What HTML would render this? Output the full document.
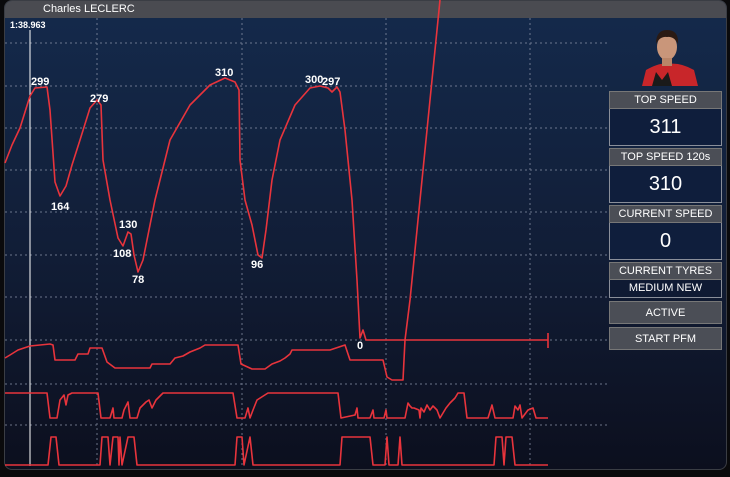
<!DOCTYPE html>
<html><head><style>
body{margin:0;width:730px;height:477px;background:#0a0a0c;overflow:hidden;font-family:"Liberation Sans",sans-serif;position:relative}
.win{position:absolute;left:4px;top:0;width:723px;height:470px;border-radius:8px;overflow:hidden;background:linear-gradient(#142a4c,#111d36 55%,#0c0f1e);border:1px solid #3a3d44;box-sizing:border-box}
.title{position:absolute;left:0;top:0;right:0;height:17px;background:#4a4b51;color:#fff;font-size:11px;line-height:17px;padding-left:38px}
svg{position:absolute;left:0;top:0}
.p{position:absolute;left:609px;width:113px;box-sizing:border-box;color:#fff;text-align:center}
.h{background:#4b4e56;border:1px solid #777;font-size:11px;height:18px;line-height:17px}
.v{background:#0f1e3c;border:1px solid #8a8f9a;border-top:none;font-size:20px;height:37px;line-height:36px}
.b{background:#4b4e56;border:1px solid #777;font-size:11px;height:23px;line-height:22px}
</style></head><body>
<div class="win"><div class="title">Charles LECLERC</div></div>
<svg width="730" height="477">
<g stroke="#8a93a8" stroke-width="1" stroke-dasharray="2,3" opacity="0.75">
<line x1="97" y1="18" x2="97" y2="466"/><line x1="242" y1="18" x2="242" y2="466"/><line x1="386" y1="18" x2="386" y2="466"/><line x1="530" y1="18" x2="530" y2="466"/>
<line x1="5" y1="43" x2="609" y2="43"/><line x1="5" y1="86" x2="609" y2="86"/><line x1="5" y1="128" x2="609" y2="128"/><line x1="5" y1="170" x2="609" y2="170"/><line x1="5" y1="212" x2="609" y2="212"/><line x1="5" y1="255" x2="609" y2="255"/><line x1="5" y1="297" x2="609" y2="297"/><line x1="5" y1="340" x2="609" y2="340"/><line x1="5" y1="384" x2="609" y2="384"/><line x1="5" y1="425" x2="609" y2="425"/>
</g>
<line x1="30" y1="30" x2="30" y2="466" stroke="#fff" stroke-width="1"/>
<g fill="none" stroke="#e8343c" stroke-width="1.6" stroke-linejoin="round">
<polyline points="5,163 12,145 20,128 30,96 35,88 47,87 50,110 55,182 60,196 66,186 72,165 80,140 90,108 97,100 101,105 103,160 110,200 118,238 123,246 128,232 131,234 134,255 138,272 143,260 148,235 155,200 170,140 190,105 210,85 225,78 235,82 239,90 240,160 245,200 252,225 258,255 262,258 266,230 272,180 280,140 295,105 310,88 320,86 328,88 332,92 337,87 340,92 345,130 352,200 357,280 360,338 363,330 366,340 548,340"/>
<line x1="548" y1="333" x2="548" y2="348"/>
<polyline points="5,358 10,355 18,350 30,346 40,345 50,344 53,345 55,360 75,360 78,354 88,354 90,348 102,348 107,362 115,368 150,368 152,364 170,364 175,358 183,356 190,352 200,348 205,345 238,345 241,364 252,369 265,369 272,364 280,361 285,358 290,354 292,350 330,350 345,345 350,360 383,360 387,377 392,380 403,380 405,340 410,300 425,150 440,0"/>
<polyline points="5,393 47,393 50,418 57,418 60,400 64,395 66,405 68,395 72,393 98,393 101,418 110,418 113,408 114,418 122,418 124,410 128,402 130,418 137,418 140,408 146,402 149,400 152,408 156,400 163,393 233,393 237,418 245,418 248,408 250,418 253,410 257,400 268,393 338,393 341,418 355,415 357,408 358,418 370,418 373,410 374,418 384,418 386,410 387,418 405,418 408,403 410,406 412,408 414,408 419,410 420,418 421,408 424,412 427,405 430,410 433,406 437,410 440,418 446,408 450,403 455,398 458,393 464,393 467,418 488,418 492,405 495,418 513,418 515,406 518,410 520,405 522,418 528,410 533,408 536,418 548,418"/>
<polyline points="5,465 48,465 51,437 56,437 59,465 100,465 102,437 108,437 110,465 113,437 118,437 119,465 120,437 122,465 128,437 134,437 137,465 235,465 237,437 242,437 244,465 250,437 253,465 340,465 342,437 370,437 373,465 385,465 387,437 389,465 398,465 400,437 402,465 494,465 496,437 502,437 504,465 506,437 512,437 515,465 548,465"/>
</g>
<g fill="#fff" font-family="Liberation Sans" font-weight="bold" font-size="11">
<text x="31" y="85">299</text><text x="51" y="210">164</text><text x="90" y="102">279</text><text x="119" y="228">130</text><text x="113" y="257">108</text><text x="132" y="283">78</text><text x="215" y="76">310</text><text x="251" y="268">96</text><text x="305" y="83">300</text><text x="322" y="85">297</text><text x="357" y="349">0</text>
<text x="10" y="28" font-size="9">1:38.963</text>
</g>
<g>
<path d="M642 86 L646 70 Q660 62 668 64 Q680 62 694 70 L698 86Z" fill="#c8262a"/>
<path d="M652 86 L656 72 L662 80 L668 72 L672 86Z" fill="#1a1a1a"/>
<ellipse cx="667" cy="47" rx="10" ry="13" fill="#c9967a"/>
<path d="M656 44 Q656 30 667 30 Q679 30 678 44 Q674 36 667 37 Q660 36 656 44Z" fill="#2a1a14"/>
<rect x="662" y="58" width="10" height="8" fill="#b98568"/>
</g>
</svg>
<div class="p h" style="top:91px">TOP SPEED</div><div class="v p" style="top:109px">311</div>
<div class="p h" style="top:148px">TOP SPEED 120s</div><div class="v p" style="top:166px">310</div>
<div class="p h" style="top:205px">CURRENT SPEED</div><div class="v p" style="top:223px">0</div>
<div class="p h" style="top:262px">CURRENT TYRES</div><div class="p" style="top:280px;height:18px;line-height:17px;background:#0f1a33;border:1px solid #8a8f9a;border-top:none;font-size:11px">MEDIUM NEW</div>
<div class="p b" style="top:301px">ACTIVE</div>
<div class="p b" style="top:327px">START PFM</div>
</body></html>
